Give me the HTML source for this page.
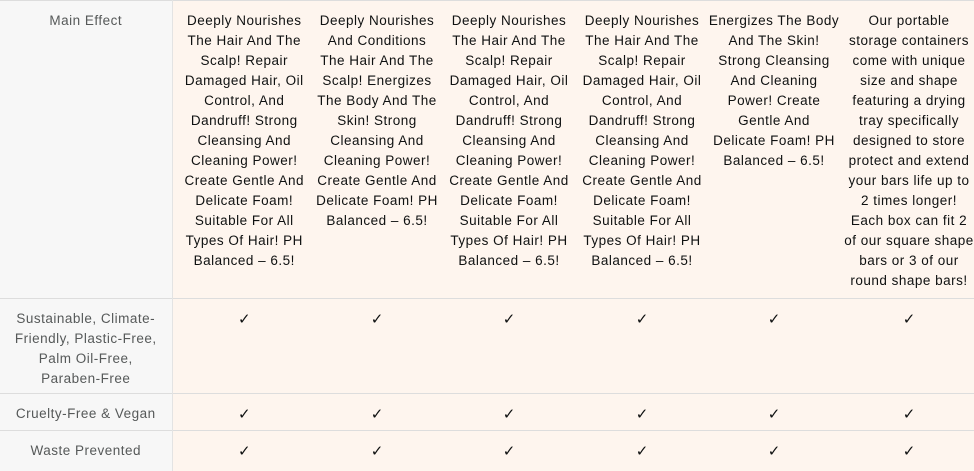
<!DOCTYPE html>
<html><head><meta charset="utf-8"><style>
html,body{margin:0;padding:0;width:974px;height:465px;overflow:hidden;background:#fff}
table{border-collapse:collapse;table-layout:fixed;width:974px;font-family:"Liberation Sans",Arial,sans-serif;font-size:13.5px;letter-spacing:0.5px;line-height:20px;position:absolute;top:0;left:0}
td{text-align:center;vertical-align:top;border-top:1px solid #ddd;padding:10px 0 0 0;color:#0f1111;background:#fef5ee;white-space:nowrap;overflow:visible}
td.h{background:#f7f7f7;color:#565959;border-right:1px solid #e3e3e3}
td.c{font-size:15px;font-family:"DejaVu Sans",sans-serif;letter-spacing:0}
tr.r1 td{height:287px}
tr.r2 td{height:84px}
tr.r3 td{height:26px}
tr.r4 td{height:30px}
</style></head><body>
<table>
<colgroup><col style="width:172px"><col style="width:144px"><col style="width:122px"><col style="width:142px"><col style="width:124px"><col style="width:140px"><col style="width:130px"></colgroup>
<tr class="r1"><td class="h">Main Effect</td>
<td>Deeply Nourishes<br>The Hair And The<br>Scalp! Repair<br>Damaged Hair, Oil<br>Control, And<br>Dandruff! Strong<br>Cleansing And<br>Cleaning Power!<br>Create Gentle And<br>Delicate Foam!<br>Suitable For All<br>Types Of Hair! PH<br>Balanced – 6.5!</td>
<td>Deeply Nourishes<br>And Conditions<br>The Hair And The<br>Scalp! Energizes<br>The Body And The<br>Skin! Strong<br>Cleansing And<br>Cleaning Power!<br>Create Gentle And<br>Delicate Foam! PH<br>Balanced – 6.5!</td>
<td>Deeply Nourishes<br>The Hair And The<br>Scalp! Repair<br>Damaged Hair, Oil<br>Control, And<br>Dandruff! Strong<br>Cleansing And<br>Cleaning Power!<br>Create Gentle And<br>Delicate Foam!<br>Suitable For All<br>Types Of Hair! PH<br>Balanced – 6.5!</td>
<td>Deeply Nourishes<br>The Hair And The<br>Scalp! Repair<br>Damaged Hair, Oil<br>Control, And<br>Dandruff! Strong<br>Cleansing And<br>Cleaning Power!<br>Create Gentle And<br>Delicate Foam!<br>Suitable For All<br>Types Of Hair! PH<br>Balanced – 6.5!</td>
<td>Energizes The Body<br>And The Skin!<br>Strong Cleansing<br>And Cleaning<br>Power! Create<br>Gentle And<br>Delicate Foam! PH<br>Balanced – 6.5!</td>
<td>Our portable<br>storage containers<br>come with unique<br>size and shape<br>featuring a drying<br>tray specifically<br>designed to store<br>protect and extend<br>your bars life up to<br>2 times longer!<br>Each box can fit 2<br>of our square shape<br>bars or 3 of our<br>round shape bars!</td></tr>
<tr class="r2"><td class="h">Sustainable, Climate-<br>Friendly, Plastic-Free,<br>Palm Oil-Free,<br>Paraben-Free</td><td class="c">✓</td><td class="c">✓</td><td class="c">✓</td><td class="c">✓</td><td class="c">✓</td><td class="c">✓</td></tr>
<tr class="r3"><td class="h">Cruelty-Free &amp; Vegan</td><td class="c">✓</td><td class="c">✓</td><td class="c">✓</td><td class="c">✓</td><td class="c">✓</td><td class="c">✓</td></tr>
<tr class="r4"><td class="h">Waste Prevented</td><td class="c">✓</td><td class="c">✓</td><td class="c">✓</td><td class="c">✓</td><td class="c">✓</td><td class="c">✓</td></tr>
</table>
</body></html>
